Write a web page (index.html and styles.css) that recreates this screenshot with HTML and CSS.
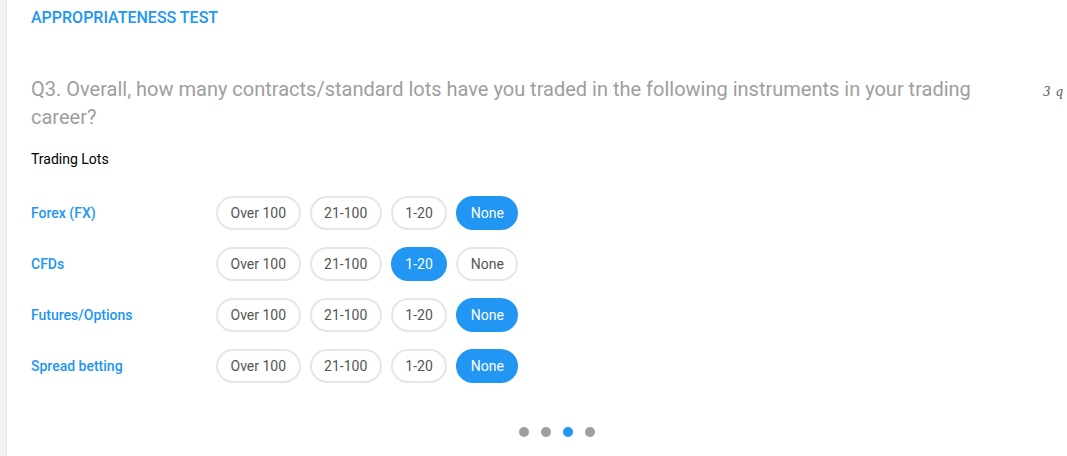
FILE: index.html
```html
<!DOCTYPE HTML>
<html>
  <head>
    <title>Appropriateness Test</title>
    <meta charset="utf-8" />
    <link rel="stylesheet" href="styles.css">
  </head>
  <body>
    <div class="card">
      <h3 class="title">APPROPRIATENESS TEST</h3>
      <div class="question-row">
        <p class="question">Q3. Overall, how many contracts/standard lots have you traded in the following instruments in your trading career?</p>
        <span class="side">3 q</span>
      </div>
      <div class="sub">Trading Lots</div>
      <div class="rows">
        <div class="row">
          <span class="label">Forex (FX)</span>
          <div class="opts">
            <button class="opt">Over 100</button>
            <button class="opt">21-100</button>
            <button class="opt">1-20</button>
            <button class="opt active">None</button>
          </div>
        </div>
        <div class="row">
          <span class="label">CFDs</span>
          <div class="opts">
            <button class="opt">Over 100</button>
            <button class="opt">21-100</button>
            <button class="opt active">1-20</button>
            <button class="opt">None</button>
          </div>
        </div>
        <div class="row">
          <span class="label">Futures/Options</span>
          <div class="opts">
            <button class="opt">Over 100</button>
            <button class="opt">21-100</button>
            <button class="opt">1-20</button>
            <button class="opt active">None</button>
          </div>
        </div>
        <div class="row">
          <span class="label">Spread betting</span>
          <div class="opts">
            <button class="opt">Over 100</button>
            <button class="opt">21-100</button>
            <button class="opt">1-20</button>
            <button class="opt active">None</button>
          </div>
        </div>
      </div>
      <div class="dots">
        <span class="dot"></span>
        <span class="dot"></span>
        <span class="dot on"></span>
        <span class="dot"></span>
      </div>
    </div>
  </body>
</html>
```
FILE: styles.css
```css
*{
  margin:0;
  padding:0;
  box-sizing:border-box;
}
html,body{
  height:100%;
  overflow:hidden;
}
body{
  background:#f4f4f4;
  font-family:Roboto,"Liberation Sans",sans-serif;
  padding-left:6px;
}
.card{
  background:#fff;
  border-left:1px solid #e4e4e4;
  min-height:100%;
  padding:8px 0 0 24px;
}
.title{
  font-size:16px;
  line-height:20px;
  font-weight:500;
  color:#2196f3;
}
.question-row{
  display:flex;
  align-items:baseline;
  margin-top:47px;
  white-space:nowrap;
}
.question{
  flex:0 0 990px;
  white-space:normal;
  font-size:20px;
  line-height:28px;
  color:#9e9e9e;
}
.side{
  margin-left:22px;
  font-family:"DejaVu Serif","Liberation Serif",serif;
  font-style:italic;
  font-size:12px;
  word-spacing:1px;
  color:#555;
}
.sub{
  margin-top:18px;
  font-size:14px;
  line-height:20px;
  color:#000;
}
.rows{
  margin-top:27px;
  display:flex;
  flex-direction:column;
  gap:17px;
}
.row{
  display:flex;
  align-items:center;
}
.label{
  width:185px;
  font-size:14px;
  font-weight:500;
  color:#2196f3;
}
.opts{
  display:flex;
  gap:9px;
}
.opt{
  height:34px;
  padding:0 12.5px;
  border:2px solid #e6e6e6;
  border-radius:17px;
  background:#fff;
  font-family:Roboto,"Liberation Sans",sans-serif;
  font-size:14px;
  color:#555;
}
.opt.active{
  background:#2196f3;
  border-color:#2196f3;
  color:#fff;
}
.dots{
  display:flex;
  gap:12px;
  margin:44px 0 0 488px;
}
.dot{
  width:10px;
  height:10px;
  border-radius:50%;
  background:#9e9e9e;
}
.dot.on{
  background:#2196f3;
}
```
